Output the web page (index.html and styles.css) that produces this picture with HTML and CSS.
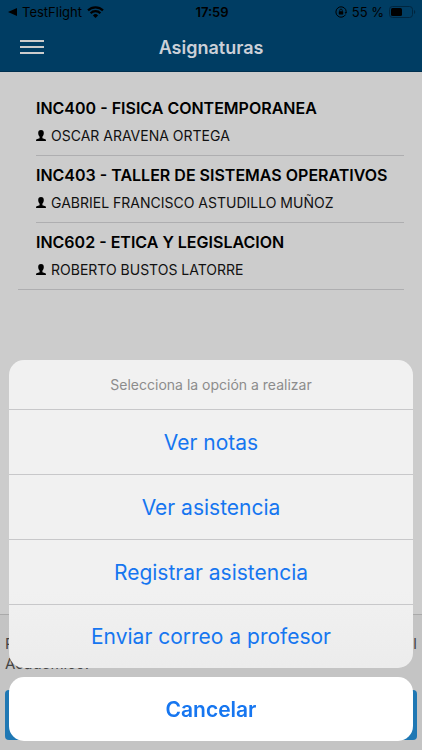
FILE: index.html
```html
<!DOCTYPE html>
<html lang="es">
<head>
  <meta charset="UTF-8">
  <meta name="viewport" content="width=device-width, initial-scale=1">
  <title>Asignaturas</title>
  <link rel="stylesheet" href="styles.css">
</head>
<body>
  <header class="header">
    <div class="status">
      <div class="status-left">
        <svg class="back" viewBox="0 0 9 8"><path d="M0 4L9 0V8Z"/></svg>
        <span>TestFlight</span>
        <svg class="wifi" viewBox="0 0 17 12">
          <path d="M8.5 12L5.9 9.4a3.7 3.7 0 0 1 5.2 0Z"/>
          <path d="M3.6 7.2a7 7 0 0 1 9.8 0M1 4.4a10.8 10.8 0 0 1 15 0" fill="none" stroke="#000" stroke-width="2.2"/>
        </svg>
      </div>
      <span class="time">17:59</span>
      <div class="status-right">
        <svg class="lock" viewBox="0 0 12 12">
          <path d="M10.6 3.4A5.2 5.2 0 1 0 10.6 8.6" fill="none" stroke="#000"/>
          <path d="M10.6 3.4A5.2 5.2 0 0 1 11 7" fill="none" stroke="#000"/>
          <path d="M9.6 6.2H12L10.8 8Z"/>
          <rect x="3.8" y="5.3" width="4.4" height="3.3" rx=".5"/>
          <path d="M4.7 5.5V4.4a1.3 1.3 0 0 1 2.6 0v1.1" fill="none" stroke="#000" stroke-width=".8"/>
        </svg>
        <span>55 %</span>
        <svg class="battery" viewBox="0 0 27 12">
          <rect x=".5" y=".5" width="23" height="11" rx="3" fill="none" stroke="#00263f"/>
          <rect x="2" y="2" width="11" height="8" rx="1.5"/>
          <path d="M25 4a2.2 2.2 0 0 1 0 4Z" fill="#00263f"/>
        </svg>
      </div>
    </div>
    <div class="toolbar">
      <button class="menu" aria-label="Menú">
        <svg viewBox="0 0 24 14"><path d="M0 1H24M0 7H24M0 13H24" stroke="#ccc" stroke-width="2"/></svg>
      </button>
      <h1>Asignaturas</h1>
    </div>
  </header>

  <main>
    <ul class="courses">
      <li>
        <div class="course">
          <h2>INC400 - FISICA CONTEMPORANEA</h2>
          <p><svg class="person" viewBox="0 0 10 11"><path d="M5 0C3 0 2.200 1.300 2.200 3C2.200 4.800 2.900 6 3.600 6.700V8.300L.6 9.200Q0 9.500 0 11H10Q10 9.500 9.400 9.200L6.400 8.300V6.700C7.100 6 7.800 4.800 7.800 3C7.800 1.300 7 0 5 0Z"/></svg>OSCAR ARAVENA ORTEGA</p>
        </div>
      </li>
      <li>
        <div class="course">
          <h2>INC403 - TALLER DE SISTEMAS OPERATIVOS</h2>
          <p><svg class="person" viewBox="0 0 10 11"><path d="M5 0C3 0 2.200 1.300 2.200 3C2.200 4.800 2.900 6 3.600 6.700V8.300L.6 9.200Q0 9.500 0 11H10Q10 9.500 9.400 9.200L6.400 8.300V6.700C7.100 6 7.800 4.800 7.800 3C7.800 1.300 7 0 5 0Z"/></svg>GABRIEL FRANCISCO ASTUDILLO MUÑOZ</p>
        </div>
      </li>
      <li>
        <div class="course">
          <h2>INC602 - ETICA Y LEGISLACION</h2>
          <p><svg class="person" viewBox="0 0 10 11"><path d="M5 0C3 0 2.200 1.300 2.200 3C2.200 4.800 2.900 6 3.600 6.700V8.300L.6 9.200Q0 9.500 0 11H10Q10 9.500 9.400 9.200L6.400 8.300V6.700C7.100 6 7.800 4.800 7.800 3C7.800 1.300 7 0 5 0Z"/></svg>ROBERTO BUSTOS LATORRE</p>
        </div>
      </li>
    </ul>
  </main>

  <footer class="footer">
    <p>Para mayor información, ingresar a nuestro Portal Académico.</p>
    <button class="portal" aria-label="Portal"></button>
  </footer>

  <div class="sheet" role="dialog" aria-labelledby="sheet-title">
    <div class="options">
      <p id="sheet-title">Selecciona la opción a realizar</p>
      <button>Ver notas</button>
      <button>Ver asistencia</button>
      <button>Registrar asistencia</button>
      <button>Enviar correo a profesor</button>
    </div>
    <button class="cancel">Cancelar</button>
  </div>
</body>
</html>
```

FILE: styles.css
```css
* {
  box-sizing: border-box;
}
body {
  display: flex;
  flex-direction: column;
  min-height: 100vh;
  margin: 0;
  background: #ccc;
  color: #000;
  font-family: Inter, "Liberation Sans", sans-serif;
}
h1, h2, p, ul {
  margin: 0;
  padding: 0;
}
button {
  border: none;
  font-family: inherit;
  cursor: pointer;
}

/* header */
.header {
  height: 72px;
  background: #003d63;
  border-bottom: 1px solid #00304f;
}
.status {
  display: grid;
  grid-template-columns: 1fr auto 1fr;
  align-items: center;
  height: 24px;
  padding: 0 6px 0 8px;
  font-size: 13px;
}
.status-left, .status-right {
  display: flex;
  align-items: center;
  gap: 5px;
}
.status-right {
  justify-content: flex-end;
}
.time {
  font-weight: 600;
}
.back {
  width: 9px;
  height: 8px;
}
.wifi {
  width: 17px;
  height: 12px;
}
.lock {
  width: 12px;
  height: 12px;
}
.battery {
  width: 27px;
  height: 12px;
}
.toolbar {
  display: grid;
  grid-template-columns: 44px 1fr 44px;
  align-items: center;
  height: 46px;
  padding: 0 10px;
}
.menu {
  height: 44px;
  padding: 0 10px;
  background: none;
}
.menu svg {
  display: block;
  width: 24px;
  height: 14px;
}
h1 {
  color: #ccd0d8;
  font-size: 18px;
  font-weight: 600;
  text-align: center;
}

/* course list */
main {
  flex: 1;
  padding: 17px 18px;
}
.courses {
  list-style: none;
}
.course {
  margin-left: 18px;
  padding: 9px 0;
  border-bottom: 1px solid #aeaeb0;
}
li:last-child {
  border-bottom: 1px solid #aeaeb0;
}
li:last-child .course {
  border-bottom: none;
}
h2 {
  margin-bottom: 8px;
  font-size: 16px;
  font-weight: 600;
  line-height: 20px;
  white-space: nowrap;
}
.course p {
  color: #111;
  font-size: 14px;
  line-height: 20px;
}
.person {
  width: 10px;
  height: 11px;
  margin-right: 5px;
  fill: #000;
}

/* footer */
.footer {
  padding: 19px 5px 10px;
  background: #c4c4c4;
  border-top: 1px solid #aaa;
}
.footer p {
  margin-bottom: 16px;
  color: #444;
  font-size: 15px;
  line-height: 20px;
  text-align: justify;
}
.portal {
  display: block;
  width: 100%;
  height: 50px;
  background: #1f78b4;
  border-radius: 4px;
}

/* action sheet */
.sheet {
  position: fixed;
  right: 9px;
  bottom: 9px;
  left: 9px;
}
.options {
  margin-bottom: 9px;
  background: linear-gradient(#f1f1f1 75%, #ececec);
  border-radius: 15px;
  overflow: hidden;
}
.options p {
  color: #8c8c8c;
  font-size: 14px;
  line-height: 49px;
  text-align: center;
}
.sheet button {
  display: block;
  width: 100%;
  height: 65px;
  padding: 0;
  background: none;
  border-top: 1px solid #c8c8ca;
  color: #1676f0;
  font-size: 21px;
}
.sheet button:last-child {
  height: 64px;
}
.sheet .cancel {
  background: #fff;
  border: none;
  border-radius: 15px;
  font-weight: 600;
}
```
